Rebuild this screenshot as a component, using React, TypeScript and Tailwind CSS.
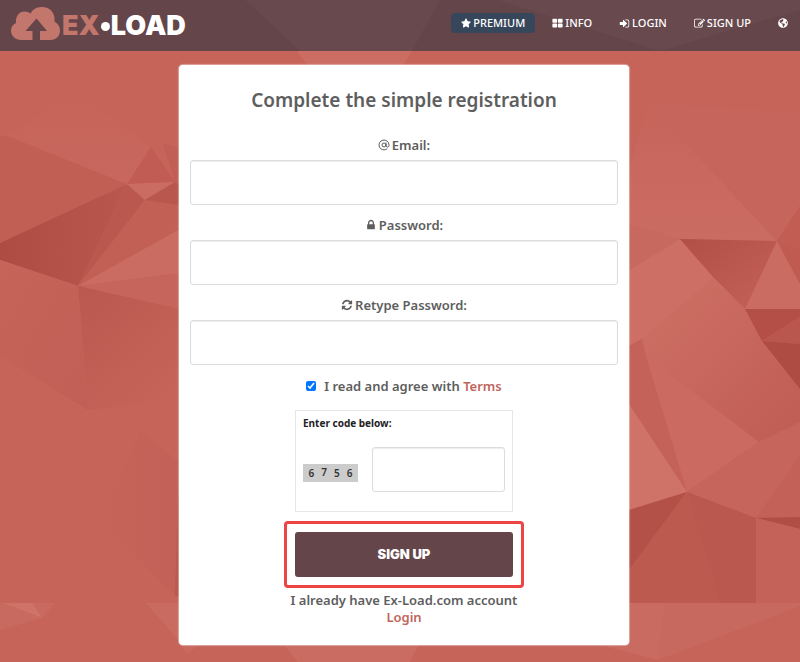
import { useState } from 'react'
import type { ReactNode } from 'react'
import { AtSign } from 'lucide-react'
import { FaGlobeAmericas, FaStar } from 'react-icons/fa'

const iconPaths = {
  signIn:
    'M1312 896q0 26-19 45l-544 544q-19 19-45 19t-45-19-19-45v-288h-448q-26 0-45-19t-19-45v-384q0-26 19-45t45-19h448v-288q0-26 19-45t45-19 45 19l544 544q19 19 19 45zm352-352v704q0 119-84.5 203.5t-203.5 84.5h-320q-13 0-22.5-9.5t-9.5-22.5q0-4-1-20t-.5-26.5 3-23.5 10-19.5 20.5-6.5h320q66 0 113-47t47-113v-704q0-66-47-113t-113-47h-312l-11.5-1-11.5-3-8-5.5-7-9-2-13.5q0-4-1-20t-.5-26.5 3-23.5 10-19.5 20.5-6.5h320q119 0 203.5 84.5t84.5 203.5z',
  edit:
    'M888 1184l116-116-152-152-116 116v56h96v96h56zm440-720q-16-16-33 1l-350 350q-17 17-1 33t33-1l350-350q17-17 1-33zm80 594v190q0 119-84.5 203.5t-203.5 84.5h-832q-119 0-203.5-84.5t-84.5-203.5v-832q0-119 84.5-203.5t203.5-84.5h832q63 0 117 25 15 7 18 23 3 17-9 29l-49 49q-14 14-32 8-23-6-45-6h-832q-66 0-113 47t-47 113v832q0 66 47 113t113 47h832q66 0 113-47t47-113v-126q0-13 9-22l64-64q15-15 35-7t20 29zm-96-738l288 288-672 672h-288v-288zm444 132l-92 92-288-288 92-92q28-28 68-28t68 28l152 152q28 28 28 68t-28 68z',
  grid:
    'M832 1024v384q0 52-38 90t-90 38h-512q-52 0-90-38t-38-90v-384q0-52 38-90t90-38h512q52 0 90 38t38 90zm0-768v384q0 52-38 90t-90 38h-512q-52 0-90-38t-38-90v-384q0-52 38-90t90-38h512q52 0 90 38t38 90zm896 768v384q0 52-38 90t-90 38h-512q-52 0-90-38t-38-90v-384q0-52 38-90t90-38h512q52 0 90 38t38 90zm0-768v384q0 52-38 90t-90 38h-512q-52 0-90-38t-38-90v-384q0-52 38-90t90-38h512q52 0 90 38t38 90z',
  lock:
    'M640 768h512v-192q0-106-75-181t-181-75-181 75-75 181v192zm832 96v576q0 40-28 68t-68 28h-960q-40 0-68-28t-28-68v-576q0-40 28-68t68-28h32v-192q0-184 132-316t316-132 316 132 132 316v192h32q40 0 68 28t28 68z',
  refresh:
    'M1639 1056q0 5-1 7-64 268-268 434.5t-478 166.5q-146 0-282.5-55t-243.5-157l-129 129q-19 19-45 19t-45-19-19-45v-448q0-26 19-45t45-19h448q26 0 45 19t19 45-19 45l-137 137q71 66 161 102t187 36q134 0 250-65t186-179q11-17 53-117 8-23 30-23h192q13 0 22.5 9.5t9.5 22.5zm25-800v448q0 26-19 45t-45 19h-448q-26 0-45-19t-19-45 19-45l138-138q-148-137-349-137-134 0-250 65t-186 179q-11 17-53 117-8 23-30 23h-199q-13 0-22.5-9.5t-9.5-22.5v-7q65-268 270-434.5t480-166.5q146 0 284 55.5t245 156.5l130-129q19-19 45-19t45 19 19 45z',
}

function Icon({ name, className }: { name: keyof typeof iconPaths; className: string }) {
  return (
    <svg viewBox="0 0 1792 1792" fill="currentColor" className={className} aria-hidden="true">
      <path d={iconPaths[name]} />
    </svg>
  )
}

// [points, fill]
const facets: [string, string][] = [
  ['0,136 8,136 127,184 0,243', '#c25f55'],
  ['8,136 75,90 151,147 127,184', 'url(#soft-left)'],
  ['0,243 127,184 78,286 0,260', 'url(#dark-left)'],
  ['127,184 145,200 78,286', '#ba584f'],
  ['145,200 180,205 180,229 78,286', '#c26056'],
  ['78,286 180,229 180,273', '#cb6c62'],
  ['78,286 180,273 180,309', '#c6655b'],
  ['78,286 180,309 180,400 88,410', 'url(#mid-left)'],
  ['0,260 78,286 88,410 0,356', 'url(#low-left)'],
  ['151,147 127,184 175,182', '#c05c53'],
  ['127,184 175,182 145,200', '#cb6c62'],
  ['175,182 180,184 180,205 145,200', '#b9564d'],
  ['163,144 180,148 180,182 175,182', '#c15e55'],
  ['140,430 180,463 180,596 175,596 100,520', 'url(#fade-left)'],
  ['178,500 180,480 180,597 175,596', '#ba574e'],
  ['2,603 33,603 42,618', '#cf7267'],
  ['33,603 55,603 42,618', '#c9695f'],
  ['0,603 2,603 42,618 0,630', '#c96a60'],
  ['146,603 180,603 180,642', '#c96b61'],
  ['297,51 412,51 403,66 308,66', '#cb6d63'],
  ['180,645 198,645 188,654', '#c96a60'],
  ['284,645 418,645 410,662 298,662', '#cb6c62'],
  ['648,103 777,241 680,239 629,224 629,170', 'url(#upper-right)'],
  ['648,103 800,112 800,206 777,241', '#c6655b'],
  ['629,224 680,239 629,270', '#c8695f'],
  ['680,239 714,278 642,339 629,346 629,270', '#cd6f64'],
  ['680,239 777,241 745,309 714,278', 'url(#dark-right)'],
  ['777,241 800,284 800,309 745,309', '#cb6c62'],
  ['777,241 800,206 800,249', '#c15d53'],
  ['777,241 800,249 800,284', '#c05b52'],
  ['642,339 714,278 745,309 762,341 800,389 800,422 759,442 646,356', 'url(#wide-right)'],
  ['745,309 800,309 800,317 762,341', '#b34f46'],
  ['762,341 800,317 800,344', '#b9564d'],
  ['762,341 800,344 800,389', '#ae4c44'],
  ['629,346 642,339 646,356 687,492 629,404', '#c46158'],
  ['629,404 687,492 629,510', '#cf7267'],
  ['646,356 759,442 687,492', '#ca6a60'],
  ['687,492 759,442 800,422 800,517 756,518', '#c6655b'],
  ['795,463 800,455 800,517 756,518', '#c36057'],
  ['756,518 800,517 800,529', '#b04e45'],
  ['629,510 687,492 629,570', '#b35047'],
  ['687,492 720,603 629,603 629,570', '#bd5a50'],
  ['687,492 756,518 756,603 720,603', '#ba574e'],
  ['756,518 800,529 800,603 756,603', '#c46259'],
  ['600,603 665,603 658,660 600,645', '#c96b61'],
  ['665,603 800,603 800,606 658,660', '#c8695f'],
]

const headerFacets: [string, string][] = [
  ['498,0 800,0 800,10 660,51', '#68494e'],
  ['245,0 440,0 412,51 300,51', '#68494d'],
]

function Backdrop() {
  return (
    <svg
      viewBox="0 0 800 662"
      preserveAspectRatio="xMidYMin slice"
      className="absolute inset-0 -z-10 h-full w-full"
      aria-hidden="true"
    >
      <defs>
        <linearGradient id="soft-left" x1="0" y1="0" x2="0" y2="1">
          <stop offset="0" stopColor="#c6645a" />
          <stop offset="1" stopColor="#c8675d" />
        </linearGradient>
        <linearGradient id="dark-left" x1="0" y1="0" x2="1" y2="0">
          <stop offset="0" stopColor="#ae4c43" />
          <stop offset="1" stopColor="#b9564d" />
        </linearGradient>
        <linearGradient id="mid-left" x1="0" y1="0" x2="0.7" y2="1">
          <stop offset="0" stopColor="#ba574e" />
          <stop offset="1" stopColor="#c6645a" />
        </linearGradient>
        <linearGradient id="low-left" x1="0" y1="0" x2="1" y2="1">
          <stop offset="0" stopColor="#c6645a" />
          <stop offset="1" stopColor="#c15e55" />
        </linearGradient>
        <linearGradient id="fade-left" x1="0" y1="0" x2="1" y2="0">
          <stop offset="0" stopColor="#c6645a" />
          <stop offset="1" stopColor="#c36057" />
        </linearGradient>
        <linearGradient id="upper-right" x1="0" y1="0" x2="0" y2="1">
          <stop offset="0" stopColor="#c6645a" />
          <stop offset="1" stopColor="#cb6c62" />
        </linearGradient>
        <linearGradient id="dark-right" x1="0" y1="0" x2="1" y2="1">
          <stop offset="0" stopColor="#b14e46" />
          <stop offset="1" stopColor="#c46259" />
        </linearGradient>
        <linearGradient id="wide-right" x1="0" y1="0" x2="1" y2="1">
          <stop offset="0" stopColor="#cf7166" />
          <stop offset="1" stopColor="#bf5c53" />
        </linearGradient>
      </defs>
      {facets.map(([points, fill]) => (
        <polygon key={points} points={points} fill={fill} />
      ))}
    </svg>
  )
}

function Header() {
  return (
    <header className="relative isolate flex h-[51px] items-start justify-between bg-[#64454a] pl-[11px] pr-3">
      <svg
        viewBox="0 0 800 51"
        preserveAspectRatio="none"
        className="absolute inset-0 -z-10 h-full w-full"
        aria-hidden="true"
      >
        {headerFacets.map(([points, fill]) => (
          <polygon key={points} points={points} fill={fill} />
        ))}
      </svg>
      <a href="#" className="flex items-end pt-[7px] font-['Inter',sans-serif] text-[27px] leading-7 font-black">
        <svg viewBox="0 0 49 33" className="mr-[2px] h-[33px] w-[49px]" fill="#c3766c" aria-hidden="true">
          <path d="M10 33C4.500 33 0 29 0 23.500C0 20 2 17.200 5 16C4.500 9 8 4.500 13.500 4.500C16 4.500 18 5.200 19.500 6.500C22 2 26 0 31 0C39 0 44.500 6 43.500 14.500C47 16.500 49 19.500 49 23.500C49 29 45 33 39.500 33H29V24H36L25.500 11.500L14.500 24H21.500V33Z" />
        </svg>
        <span className="text-[#c3766c]">EX</span>
        <span className="mx-px mb-[9px] h-[9px] w-[9px] rounded-full bg-white" />
        <span className="text-white">LOAD</span>
      </a>
      <nav className="mt-[13px] flex items-center gap-[27px] font-['Noto_Sans',sans-serif] text-[11px] leading-5 font-medium text-white">
        <a href="#" className="-mr-[10px] flex items-center gap-[2px] rounded bg-[#37475b] px-[10px]">
          <FaStar className="h-[10px] w-[10px]" />
          PREMIUM
        </a>
        <a href="#" className="flex items-center gap-[2px]">
          <Icon name="grid" className="h-[11px] w-[11px]" />
          INFO
        </a>
        <a href="#" className="flex items-center gap-[2px]">
          <Icon name="signIn" className="h-[11px] w-[11px]" />
          LOGIN
        </a>
        <a href="#" className="flex items-center gap-[2px]">
          <Icon name="edit" className="h-[11px] w-[11px]" />
          SIGN UP
        </a>
        <button type="button" aria-label="Language">
          <FaGlobeAmericas className="h-[10px] w-[10px]" />
        </button>
      </nav>
    </header>
  )
}

const inputClass =
  'h-[45px] w-full rounded-[3px] border border-[#dcdcdc] bg-white px-3 shadow-[inset_0_1px_1px_rgba(0,0,0,0.075)]'

function Field({ id, type, label, icon }: { id: string; type: string; label: string; icon: ReactNode }) {
  return (
    <div className="mb-[10px] flex flex-col items-center">
      <label htmlFor={id} className="mb-[5px] flex items-center gap-[2px] leading-5">
        {icon}
        {label}
      </label>
      <input id={id} name={id} type={type} className={inputClass} />
    </div>
  )
}

export default function App() {
  const [agreed, setAgreed] = useState(true)

  return (
    <div className="relative isolate min-h-screen bg-[#c6645a]">
      <Backdrop />
      <Header />
      <main className="pt-[14px] pr-4 pb-4 pl-6 font-['Noto_Sans',sans-serif] text-[13px] font-semibold text-[#5e5e5e]">
        <form
          onSubmit={(e) => e.preventDefault()}
          className="mx-auto flex max-w-[450px] flex-col rounded bg-white px-[11px] pb-[19px] shadow-[0_0_1px_1px_rgba(255,255,255,0.4)]"
        >
          <h1 className="mt-5 mb-5 text-center text-[19px] leading-[30px]">Complete the simple registration</h1>
          <Field id="email" type="email" label="Email:" icon={<AtSign className="h-3 w-3" />} />
          <Field
            id="password"
            type="password"
            label="Password:"
            icon={<Icon name="lock" className="h-3 w-3" />}
          />
          <Field
            id="retype"
            type="password"
            label="Retype Password:"
            icon={<Icon name="refresh" className="h-3 w-3" />}
          />
          <div className="mt-px mb-[14px] flex items-center justify-center leading-5">
            <input
              id="agree"
              type="checkbox"
              checked={agreed}
              onChange={(e) => setAgreed(e.target.checked)}
              className="mr-2 h-[10px] w-[10px]"
            />
            <label htmlFor="agree">
              I read and agree with{' '}
              <a href="#" className="text-[#c0655d]">
                Terms
              </a>
            </label>
          </div>
          <div className="mx-auto h-[102px] w-[218px] border border-[#e6e6e6] px-[7px] pt-1">
            <label htmlFor="code" className="block text-[10px] leading-4 font-bold text-[#222222]">
              Enter code below:
            </label>
            <div className="mt-4 flex items-center gap-[14px]">
              <div className="mt-[6px] flex h-[18px] w-[55px] shrink-0 justify-around bg-[#cccccc] px-[2px] text-[10px] leading-[18px] text-[#333333]">
                <span>6</span>
                <span className="-mt-px">7</span>
                <span>5</span>
                <span>6</span>
              </div>
              <input id="code" name="code" type="text" className={inputClass} />
            </div>
          </div>
          <div className="mx-auto mt-[9px] rounded-[4px] border-[3px] border-[#ef4444] p-2">
            <button
              type="submit"
              className="block h-[45px] w-[218px] rounded-[3px] bg-[#64454a] font-['Inter',sans-serif] text-[13px] font-black text-white"
            >
              SIGN UP
            </button>
          </div>
          <p className="mt-1 text-center leading-[17px]">
            I already have Ex-Load.com account
            <br />
            <a href="#" className="text-[#c0655d]">
              Login
            </a>
          </p>
        </form>
      </main>
    </div>
  )
}
